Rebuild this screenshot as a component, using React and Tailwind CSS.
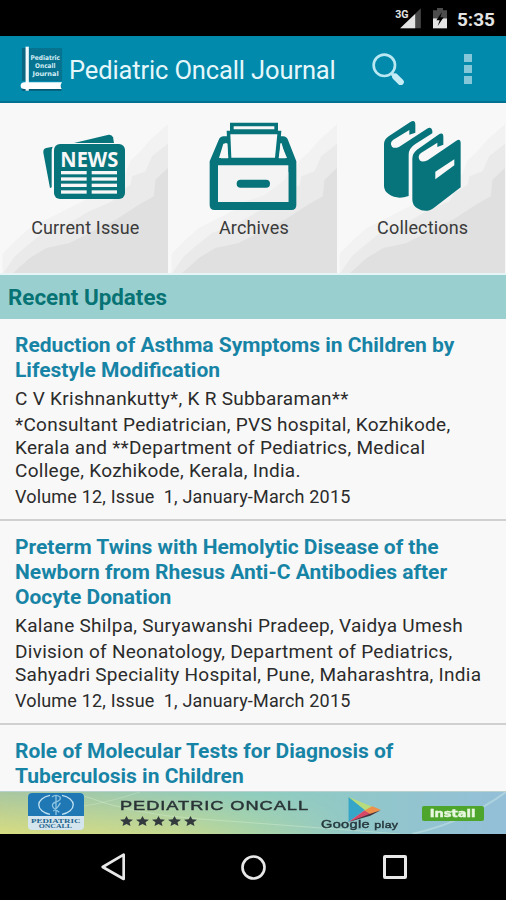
import React from 'react';

const articles = [
  {
    title: ['Reduction of Asthma Symptoms in Children by', 'Lifestyle Modification'],
    authors: 'C V Krishnankutty*, K R Subbaraman**',
    affiliation: [
      '*Consultant Pediatrician, PVS hospital, Kozhikode,',
      'Kerala and **Department of Pediatrics, Medical',
      'College, Kozhikode, Kerala, India.',
    ],
    issue: 'Volume 12, Issue  1, January-March 2015',
  },
  {
    title: [
      'Preterm Twins with Hemolytic Disease of the',
      'Newborn from Rhesus Anti-C Antibodies after',
      'Oocyte Donation',
    ],
    authors: 'Kalane Shilpa, Suryawanshi Pradeep, Vaidya Umesh',
    affiliation: [
      'Division of Neonatology, Department of Pediatrics,',
      'Sahyadri Speciality Hospital, Pune, Maharashtra, India',
    ],
    issue: 'Volume 12, Issue  1, January-March 2015',
  },
  {
    title: ['Role of Molecular Tests for Diagnosis of', 'Tuberculosis in Children'],
  },
];

const NewsIcon = () => (
  <svg viewBox="102 45 300 300" className="w-[100px] h-[100px]">
    <g fill="#07737a">
      <path d="M130 158Q129 146 139 144L158 140Q154 146 155 158V262L150 264Z" />
      <path d="M222 129L326 104Q336 103 339 112L342 129Z" />
      <rect x="162" y="132" width="213" height="165" rx="18" />
    </g>
    <g fill="#f7f7f7">
      <rect x="183" y="213" width="77" height="10" />
      <rect x="275" y="213" width="76" height="10" />
      <rect x="183" y="232" width="77" height="10" />
      <rect x="275" y="232" width="76" height="10" />
      <rect x="183" y="251" width="77" height="10" />
      <rect x="275" y="251" width="76" height="10" />
      <rect x="183" y="271" width="77" height="10" />
      <rect x="275" y="271" width="76" height="10" />
      <text
        x="181"
        y="200"
        textLength="174"
        lengthAdjust="spacingAndGlyphs"
        fontFamily="Open Sans, sans-serif"
        fontWeight="700"
        fontSize="62"
      >
        NEWS
      </text>
    </g>
  </svg>
);

const ArchiveIcon = () => (
  <svg viewBox="105 45 300 300" className="w-[100px] h-[100px]">
    <g fill="#07737a">
      <path d="M125 184L152 120Q156 109 167 109H180L181 130H170L159 175H353L341 130H331L332 109H345Q356 109 360 120L385 184V315Q385 330 370 330H140Q125 330 125 315Z" />
      <path d="M186 68H330V92H340L333 178H180L176 92H186Z" />
    </g>
    <path d="M197 79H319V88H197ZM187 103H328L321 173H190Z" fill="#f8f8f8" />
    <path d="M150 196H361V306H150Z" fill="#f4f4f4" />
    <path d="M361 215V306H230L290 285L350 240Z" fill="#efefef" />
    <path d="M166 131L178 131L181 174H153ZM339 131L357 174H332Z" fill="#f8f8f8" />
    <rect x="206" y="239" width="100" height="24" rx="12" fill="#07737a" />
  </svg>
);

const BooksIcon = () => (
  <svg viewBox="107 45 300 300" className="w-[100px] h-[100px]">
    <path
      d="M143 133Q143 118 157 109L222 66Q237 58 237 74V98L219 104V90L171 119Q159 128 167 140Q174 147 189 140L272 86Q285 78 288 93V100L237 132Q217 145 217 164V288Q182 300 158 283Q143 273 143 258Z"
      fill="#07737a"
    />
    <path
      d="M228 176Q228 160 242 149L306 104Q321 95 321 111V134L303 141V128L255 158Q242 167 250 181Q257 188 274 181L360 122Q373 114 373 130V262L296 321Q270 342 243 325Q228 315 228 299Z"
      fill="#07737a"
    />
    <path d="M297 215L354 178V196L297 238Z" fill="#f8f8f8" />
  </svg>
);

const tiles = [
  { label: 'Current Issue', Icon: NewsIcon },
  { label: 'Archives', Icon: ArchiveIcon },
  { label: 'Collections', Icon: BooksIcon },
];

// Folded paper shading behind every tile
const TileShade = () => (
  <svg viewBox="0 0 510 510" preserveAspectRatio="none" className="absolute inset-0 w-full h-full">
    <path d="M508 64L455 110L420 150L395 172L378 215L330 245L290 275L220 310L150 345L90 375L50 410L8 452V510H508Z" fill="#f2f2f2" />
    <path d="M508 122L460 160L440 205L400 220L395 245L355 270L340 295L270 325L200 365L130 390L80 430L45 460L10 510H508Z" fill="#eaeaea" />
    <path d="M508 195L470 230L465 280L420 305L350 350L280 385L210 420L140 435L90 465L40 510H508Z" fill="#e0e0e0" />
  </svg>
);

const StatusBar = () => (
  <div className="h-9 bg-black flex items-center justify-end pr-[11px] text-[#e4e4e4]">
    <svg viewBox="0 0 80 66" className="w-[27px] h-[22px] mr-[11px]">
      <path d="M15 64L77 4V64Z" fill="#484848" />
      <path d="M15 64L60 21V64Z" fill="#e4e4e4" />
      <text x="0" y="33" fontFamily="Roboto, sans-serif" fontWeight="700" fontSize="34" textLength="40" lengthAdjust="spacingAndGlyphs" fill="#e4e4e4" stroke="#000" strokeWidth="3" paintOrder="stroke">
        3G
      </text>
    </svg>
    <svg viewBox="0 0 42 66" className="w-[14px] h-[22px] mr-[10px]">
      <path d="M0 10H12V3H30V10H42V34H0Z" fill="#4c4c4c" />
      <path d="M0 34H42V64H0Z" fill="#e4e4e4" />
      <path d="M27 15L10 40H20L14 57L32 31H22Z" fill="#000" />
    </svg>
    <span className="text-[19px] font-bold leading-none pt-[2px]">5:35</span>
  </div>
);

const AppBar = () => (
  <div className="h-[67px] bg-[#018aab] border-b-2 border-[#04708f] flex items-center">
    <svg viewBox="0 0 132 140" className="w-11 h-[46px] ml-[19px]">
      <path d="M8 6H130V106H8Z" fill="#0b6681" />
      <path d="M24 6H130V106H24Z" fill="#067391" />
      <path d="M8 124H128V136H8Z" fill="#075a73" />
      <path d="M19 2H29V136H19Z" fill="#f4fafb" />
      <path d="M4 121Q4 110 16 110H130Q122 120 129 131H16Q4 131 4 121Z" fill="#fff" />
      <g fontFamily="DejaVu Sans, sans-serif" fontWeight="700" fontSize="20" fill="#d3edf4">
        <text x="34" y="44" textLength="90" lengthAdjust="spacingAndGlyphs">Pediatric</text>
        <text x="48" y="67" textLength="62" lengthAdjust="spacingAndGlyphs">Oncall</text>
        <text x="40" y="90" textLength="80" lengthAdjust="spacingAndGlyphs">Journal</text>
      </g>
    </svg>
    <h1 className="ml-[6px] w-[290px] text-[25.5px] leading-none tracking-[-0.13px] text-[#e6f7fb] whitespace-nowrap pt-[5px]">
      Pediatric Oncall Journal
    </h1>
    <svg viewBox="0 0 96 96" className="w-8 h-8 ml-[13px]">
      <circle cx="37" cy="37" r="32" fill="none" stroke="#b9e8f3" strokeWidth="8" />
      <path d="M57 60L68 70" stroke="#b9e8f3" strokeWidth="10" />
      <path d="M70 71L86 87" stroke="#c6edf6" strokeWidth="19" strokeLinecap="round" />
    </svg>
    <div className="ml-auto mr-[34px] flex flex-col gap-[3px]">
      <span className="w-2 h-2 bg-[#83c7d8]"></span>
      <span className="w-2 h-2 bg-[#83c7d8]"></span>
      <span className="w-2 h-2 bg-[#83c7d8]"></span>
    </div>
  </div>
);

const Star = () => (
  <svg viewBox="0 0 26 20" preserveAspectRatio="none" className="w-[13px] h-[10px]">
    <path d="M13 0L16.500 6.500L26 7.500L19 12.500L21 20L13 16L5 20L7 12.500L0 7.500L9.500 6.500Z" fill="#333a3d" />
  </svg>
);

const AdBanner = () => (
  <div className="relative h-[43px] shrink-0 overflow-hidden bg-linear-to-r from-[#a9c7a0] via-[#8fcdbf] to-[#94bfd8] border-t border-[#b9cfcd]">
    <svg viewBox="0 0 506 42" preserveAspectRatio="none" className="absolute inset-0 w-full h-full">
      <defs>
        <linearGradient id="glow" x1="0" y1="0" x2="0" y2="1">
          <stop offset="0" stopColor="#dfe07c" stopOpacity="0" />
          <stop offset="1" stopColor="#dfe07c" stopOpacity="0.85" />
        </linearGradient>
        <linearGradient id="fade" x1="0" y1="0" x2="1" y2="0">
          <stop offset="0" stopColor="#fff" />
          <stop offset="0.35" stopColor="#fff" stopOpacity="0.75" />
          <stop offset="0.7" stopColor="#fff" stopOpacity="0" />
        </linearGradient>
        <mask id="left">
          <rect width="506" height="42" fill="url(#fade)" />
        </mask>
      </defs>
      <rect width="506" height="42" fill="url(#glow)" mask="url(#left)" />
      <path d="M84 4Q130 22 200 27T400 42" fill="none" stroke="#d4eed0" strokeWidth="1" opacity="0.45" />
      <path d="M84 14Q110 10 140 0" fill="none" stroke="#d4eed0" strokeWidth="1" opacity="0.35" />
      <path d="M412 42Q465 30 506 0" fill="none" stroke="#c8e5e6" strokeWidth="2" opacity="0.5" />
    </svg>
    <div className="relative flex h-full">
      <svg viewBox="0 0 168 111" className="w-14 h-[37px] ml-[28px] mt-px">
        <rect width="168" height="111" rx="12" fill="#d5e5ed" />
        <path d="M0 69V12Q0 0 12 0H156Q168 0 168 12V69Z" fill="#1f78b4" />
        <path d="M66 7A49 30 0 0 0 66 64M102 7A49 30 0 0 1 102 64" fill="none" stroke="#bfe0f0" strokeWidth="4" />
        <path d="M84 5V66M72 12Q84 2 96 12Q100 22 84 27Q68 32 76 44Q84 50 94 58M97 29Q92 42 76 54" fill="none" stroke="#8cc3e1" strokeWidth="4" />
        <g fontFamily="Liberation Serif, serif" fontWeight="700" fontSize="19" fill="#20628c">
          <text x="9" y="90" textLength="148" lengthAdjust="spacingAndGlyphs">PEDIATRIC</text>
          <text x="32" y="106" textLength="100" lengthAdjust="spacingAndGlyphs">ONCALL</text>
        </g>
      </svg>
      <div className="ml-[36px] w-[200px] pt-[6px]">
        <div className="origin-left scale-x-[1.35] text-[13.5px] leading-[15px] font-['Liberation_Sans',sans-serif] text-[#2a3437] tracking-[0.7px] whitespace-nowrap [-webkit-text-stroke:0.45px_#2a3437]">
          PEDIATRIC ONCALL
        </div>
        <div className="flex gap-[3px] mt-[3px]">
          <Star />
          <Star />
          <Star />
          <Star />
          <Star />
        </div>
      </div>
      <div className="w-[80px] pt-[5px]">
        <svg viewBox="0 0 102 76" className="w-[34px] h-[25px] ml-[27px]">
          <path d="M4 0L60 34L4 76Z" fill="#35a6c8" />
          <path d="M4 0L76 30L55 41Z" fill="#b8dc7c" />
          <path d="M76 28L102 39L72 54L52 41Z" fill="#ee914b" />
          <path d="M52 41L73 53L4 76Z" fill="#d64768" />
          <path d="M102 40L70 57L4 76L70 51Z" fill="#45343f" />
        </svg>
        <div className="-mt-[2px] ml-px origin-left scale-x-[1.45] whitespace-nowrap font-['Liberation_Sans',sans-serif] text-[#26383d] text-[10px] leading-[10px] tracking-[0.25px] [-webkit-text-stroke:0.4px_#26383d]">
          Google <span className="text-[8.5px]">play</span>
        </div>
      </div>
      <div className="ml-[22px] mt-[14px] w-[62px] h-[15px] rounded-[2px] bg-[#4ea52c] flex items-center justify-center">
        <span className="scale-x-[1.3] text-[10px] leading-none font-bold font-['DejaVu_Sans',sans-serif] text-[#e8f7df] [-webkit-text-stroke:0.4px_#e8f7df]">Install</span>
      </div>
    </div>
  </div>
);

const NavBar = () => (
  <div className="h-[66px] shrink-0 bg-black flex items-center">
    <svg viewBox="0 0 75 84" className="w-[25px] h-[28px] ml-[101px]">
      <path d="M5 42L68 5V78Z" fill="none" stroke="#e8e8e8" strokeWidth="8" strokeLinejoin="round" />
    </svg>
    <svg viewBox="0 0 75 75" className="w-[25px] h-[25px] ml-[115px]">
      <circle cx="37.5" cy="37.5" r="33" fill="none" stroke="#e8e8e8" strokeWidth="8" />
    </svg>
    <div className="w-[24px] h-[24px] ml-[117px] rounded-[2px] border-[3px] border-[#e8e8e8]"></div>
  </div>
);

const Article = ({ article }) => (
  <div className="px-[15px] pt-[14px] pb-[11px] border-b-2 border-[#d0d0d0] whitespace-pre">
    {article.title.map((line) => (
      <p key={line} className="text-[21px] leading-[25px] font-bold text-[#1784a6]">{line}</p>
    ))}
    {article.authors && (
      <>
        <p className="mt-[3px] text-[19px] leading-[25px] text-[#2b2b2b] tracking-[0.29px]">{article.authors}</p>
        <div className="mt-[2px]">
          {article.affiliation.map((line) => (
            <p key={line} className="text-[19px] leading-[23px] text-[#2b2b2b] tracking-[0.28px]">{line}</p>
          ))}
        </div>
        <p className="mt-[3px] text-[18px] leading-[23px] text-[#2b2b2b] tracking-[0.18px]">{article.issue}</p>
      </>
    )}
  </div>
);

const App = () => {
  return (
    <div className="w-[506px] h-[900px] overflow-hidden flex flex-col bg-[#f8f8f8] font-[Roboto,sans-serif]">
      <StatusBar />
      <AppBar />

      <div className="h-[172px] shrink-0 grid grid-cols-3 border-b-2 border-[#e6f5f5]">
        {tiles.map(({ label, Icon }) => (
          <div key={label} className="relative flex flex-col items-center pt-[12px]">
            <TileShade />
            <div className="relative">
              <Icon />
            </div>
            <span className="relative mt-px ml-[2px] text-[18px] leading-6 text-[#3a3a3a] tracking-[0.15px]">{label}</span>
          </div>
        ))}
      </div>

      <h2 className="h-11 shrink-0 bg-[#99d0cf] pl-2 pt-[2px] flex items-center text-[22.4px] font-bold text-[#087374]">
        Recent Updates
      </h2>

      <div className="h-[472px] overflow-hidden">
        {articles.map((article) => (
          <Article key={article.title[0]} article={article} />
        ))}
      </div>

      <AdBanner />
      <NavBar />
    </div>
  );
};

export default App;
